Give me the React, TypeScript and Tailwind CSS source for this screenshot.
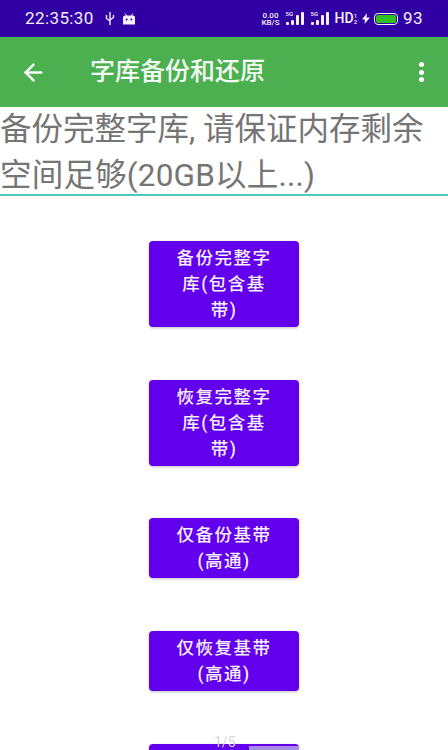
import { ArrowLeft } from 'lucide-react';

const font = { fontFamily: 'Roboto, "Noto Sans CJK SC", sans-serif' };

function Signal({ label }: { label: string }) {
  return (
    <div className="relative flex h-[13px] w-[18px] items-end gap-[2px]">
      <span className="absolute left-0 top-[-1px] text-[6px] font-medium leading-none">{label}</span>
      <span className="h-[3px] w-[3px] rounded-[1px] bg-[#f5f0ff]" />
      <span className="h-[5px] w-[3px] rounded-[1px] bg-[#f5f0ff]" />
      <span className="h-[10px] w-[3px] rounded-[1px] bg-[#f5f0ff]" />
      <span className="h-[13px] w-[3px] rounded-[1px] bg-[#f5f0ff]" />
    </div>
  );
}

function StatusBar() {
  return (
    <div className="flex h-[37px] items-center bg-[#3000a4] pl-[25px] pr-[25px] text-[#f5f0ff]">
      <span className="text-[17px] tracking-[0.4px]">22:35:30</span>
      <svg width="10" height="15" viewBox="0 0 10 15" className="ml-[11px]" fill="none" stroke="currentColor" strokeWidth="1.4">
        <path d="M5 1v13M1.5 4v3.5L5 10M8.500 4v2.500L5 9" />
      </svg>
      <svg width="14" height="12" viewBox="0 0 14 12" className="ml-[7px]" fill="currentColor">
        <path d="M1 4.500a2 2 0 0 1 2-2h8a2 2 0 0 1 2 2V11.500H1z" />
        <path d="M3 .5l2 2.500M11 .5L9 3" stroke="currentColor" />
        <circle cx="4.600" cy="6.500" r="1" fill="#3000a4" />
        <circle cx="9.400" cy="6.500" r="1" fill="#3000a4" />
      </svg>
      <div className="ml-auto flex items-center">
        <div className="flex flex-col items-center text-[8px] font-medium leading-[7px]">
          <span>0.00</span>
          <span>KB/S</span>
        </div>
        <div className="ml-[6px]">
          <Signal label="5G" />
        </div>
        <div className="ml-[7px]">
          <Signal label="5G" />
        </div>
        <span className="ml-[6px] text-[14px] font-medium">HD</span>
        <div className="flex flex-col text-[6px] font-medium leading-[6px]">
          <span>1</span>
          <span>2</span>
        </div>
        <svg width="8" height="11" viewBox="0 0 8 11" className="ml-[5px]" fill="currentColor">
          <path d="M5 0L0 6.500h3L2.500 11 8 4.500H4.500z" />
        </svg>
        <div className="ml-[4px] flex h-[12px] w-[24px] items-center rounded-[4px] border border-[#f5f0ff] p-[1px]">
          <div className="h-full w-full rounded-[2px] bg-[#2fc21f]" />
        </div>
        <span className="ml-[5px] text-[17px] tracking-[0.4px]">93</span>
      </div>
    </div>
  );
}

function AppBar() {
  return (
    <div className="flex h-[70px] items-center bg-[#4caf50] pl-[20px] pr-[24px] text-[#f4fbf4]">
      <ArrowLeft size={27} strokeWidth={2.2} />
      <span className="ml-[43px] text-[25px] font-medium">字库备份和还原</span>
      <div className="ml-auto flex flex-col gap-[2.500px]">
        <span className="h-[5px] w-[5px] rounded-full bg-white" />
        <span className="h-[5px] w-[5px] rounded-full bg-white" />
        <span className="h-[5px] w-[5px] rounded-full bg-white" />
      </div>
    </div>
  );
}

function ActionButton({ lines }: { lines: string[] }) {
  return (
    <div className="flex w-[150px] shrink-0 flex-col items-center rounded-[4px] bg-[#6200ee] py-[4px] text-[17.500px] font-medium leading-[26px] tracking-[1.500px] text-[#f6efff] shadow-[0_1px_3px_rgba(0,0,0,0.25)]">
      {lines.map((line) => (
        <span key={line}>{line}</span>
      ))}
    </div>
  );
}

export default function App() {
  return (
    <div className="relative h-[750px] w-[448px] overflow-hidden bg-white" style={font}>
      <StatusBar />
      <AppBar />
      <div className="h-[89px] border-b-2 border-[#4fc9c0] text-[31.500px] leading-[46px] text-[#757575]">
        <p>备份完整字库, 请保证内存剩余</p>
        <p className="tracking-[0.2px]">空间足够(20GB以上...)</p>
      </div>
      <div className="flex flex-col items-center gap-[52.700px] pt-[45px]">
        <ActionButton lines={['备份完整字', '库(包含基', '带)']} />
        <ActionButton lines={['恢复完整字', '库(包含基', '带)']} />
        <ActionButton lines={['仅备份基带', '(高通)']} />
        <ActionButton lines={['仅恢复基带', '(高通)']} />
        <ActionButton lines={['仅备份基带', '(高通)']} />
      </div>
      <span className="absolute left-[214px] top-[732px] text-[14px] text-[#d9d9d9]">1/5</span>
      <div className="absolute left-[249px] top-[746px] h-[4px] w-[50px] bg-[#a98be8]" />
    </div>
  );
}
